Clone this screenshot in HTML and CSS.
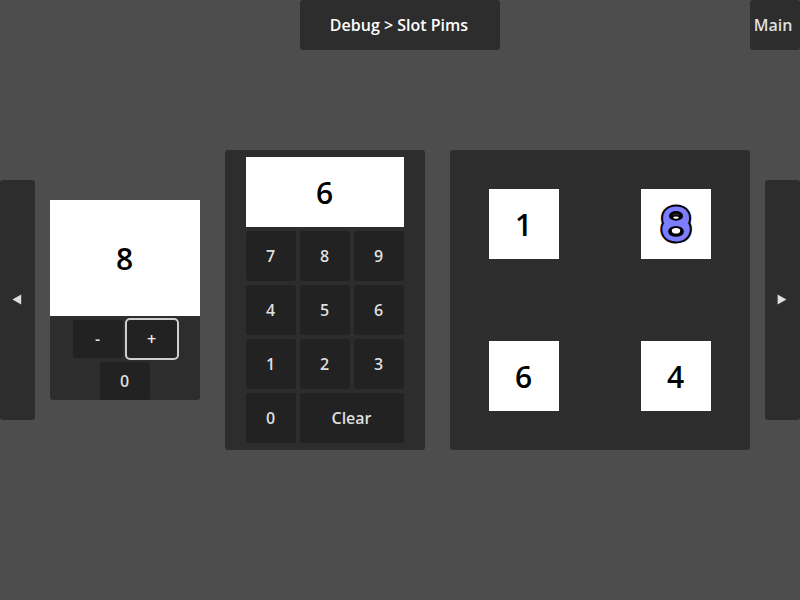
FILE: index.html
```html
<!DOCTYPE html>
<html lang="en">
<head>
<meta charset="utf-8">
<title>Debug - Slot Pims</title>
<link rel="stylesheet" href="styles.css">
</head>
<body>
<header class="topbar">
  <h1 class="title">Debug &gt; Slot Pims</h1>
  <button class="main-btn">Main</button>
</header>
<main class="stage">
  <button class="nav" aria-label="Previous"><svg width="10" height="12" viewBox="0 0 10 12"><path d="M.4 6.4 9.2 1.4V11.4Z"/></svg></button>
  <section class="counter">
    <div class="display"><span>8</span></div>
    <div class="row">
      <button class="key">-</button>
      <button class="key focused">+</button>
    </div>
    <div class="row"><button class="key">0</button></div>
  </section>
  <section class="keypad">
    <div class="display"><span>6</span></div>
    <button class="key">7</button>
    <button class="key">8</button>
    <button class="key">9</button>
    <button class="key">4</button>
    <button class="key">5</button>
    <button class="key">6</button>
    <button class="key">1</button>
    <button class="key">2</button>
    <button class="key">3</button>
    <button class="key">0</button>
    <button class="key wide">Clear</button>
  </section>
  <section class="slots">
    <div class="slot"><span>1</span></div>
    <div class="slot">
      <svg class="active-digit" width="70" height="70" viewBox="0 0 70 70">
        <text class="edge" x="35" y="45.5">8</text>
        <text class="fill" x="35" y="45.5">8</text>
        <ellipse cx="35" cy="26.9" rx="7" ry="4.9"/>
        <ellipse class="hole" cx="35" cy="28.6" rx="2.8" ry="1.2"/>
        <path class="glint" d="M31.5 26Q35 23.8 38.5 26"/>
        <ellipse cx="35" cy="42.4" rx="7.9" ry="5.4"/>
        <ellipse class="hole" cx="35" cy="41.8" rx="4.2" ry="2.8"/>
      </svg>
    </div>
    <div class="slot"><span>6</span></div>
    <div class="slot"><span>4</span></div>
  </section>
  <button class="nav next" aria-label="Next"><svg width="10" height="12" viewBox="0 0 10 12"><path d="M.6 1.4V11.4L9.4 6.4Z"/></svg></button>
</main>
</body>
</html>
```
FILE: styles.css
```css
* { box-sizing: border-box; }

body {
  margin: 0;
  width: 800px;
  height: 600px;
  overflow: hidden;
  background: #4d4d4d;
  color: #dfdfdf;
  font: 600 16px/22px "Open Sans", "Noto Sans", sans-serif;
}

button {
  margin: 0;
  padding: 0;
  border: 0;
  border-radius: 3px;
  color: inherit;
  font: inherit;
}

.topbar {
  display: grid;
  grid-template-columns: 300px 200px 1fr;
  height: 50px;
}

.title {
  grid-column: 2;
  margin: 0;
  padding-right: 2px;
  border-radius: 3px;
  background: #2d2d2d;
  color: #fff;
  font: inherit;
  line-height: 50px;
  text-align: center;
}

.main-btn {
  justify-self: end;
  width: 50px;
  padding-right: 4px;
  background: #2d2d2d;
}

.stage {
  display: flex;
  align-items: center;
  height: 500px;
}

.nav {
  display: flex;
  align-items: center;
  justify-content: center;
  width: 35px;
  height: 240px;
  padding: 0 1px 2px 0;
  background: #2d2d2d;
}

.nav svg { fill: #dfdfdf; }
.next { margin-left: 15px; }

.counter {
  display: flex;
  flex-direction: column;
  gap: 4px;
  width: 150px;
  height: 200px;
  margin: 0 25px 0 15px;
  border-radius: 0 0 3px 3px;
  background: #2d2d2d;
}

.display,
.slot {
  display: flex;
  align-items: center;
  justify-content: center;
  background: #fff;
  color: #000;
  font-size: 30px;
  line-height: 42px;
}

.display span,
.slot span { margin: 1px 1px 0 0; }

.counter .display { height: 116px; }
.counter .display span { margin-top: 2px; }

.row {
  display: flex;
  justify-content: center;
  gap: 4px;
}

.key {
  height: 50px;
  padding-right: 1px;
  background: #222;
}

.row .key { width: 50px; height: 38px; }

.row .focused {
  outline: 2px solid #cfcfcf;
  color: #f2f2f2;
}

.keypad {
  display: grid;
  grid-template-columns: repeat(3, 50px);
  align-content: start;
  justify-content: center;
  gap: 4px;
  width: 200px;
  height: 300px;
  margin-right: 25px;
  padding: 7px 0;
  border-radius: 3px;
  background: #2d2d2d;
}

.keypad .display { grid-column: span 3; height: 70px; }
.wide { grid-column: span 2; }

.slots {
  display: grid;
  grid-template: 148px 148px / 148px 148px;
  gap: 4px;
  place-items: center;
  width: 300px;
  height: 300px;
  border-radius: 3px;
  background: #2d2d2d;
}

.slot { width: 70px; height: 70px; }

.active-digit text {
  text-anchor: middle;
  stroke-linejoin: round;
}

.active-digit .edge { fill: #000; stroke: #000; stroke-width: 17px; }
.active-digit .fill { fill: #7d7dff; stroke: #7d7dff; stroke-width: 12.8px; }
.active-digit .hole { fill: #fff; }
.active-digit .glint { fill: none; stroke: #555; stroke-width: .7px; }
```
